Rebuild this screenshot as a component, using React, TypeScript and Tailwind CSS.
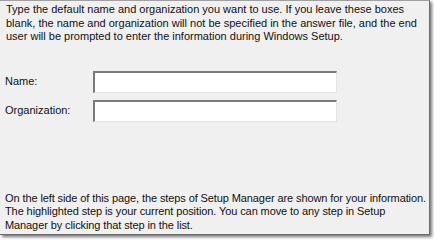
export default function App() {
  const font = { fontFamily: '"Liberation Sans", Arial, sans-serif' };
  return (
    <div className="w-[434px] h-[240px] bg-white" style={font}>
      <div className="w-[430px] h-[235px] bg-[#f0f0f0] border-t border-t-[#a0a0a0] border-r border-r-[#6b6b6b] border-b border-b-[#6b6b6b] shadow-[2px_2px_3px_rgba(0,0,0,0.55)] flex flex-col text-[11px] leading-[13.5px] text-[#111] overflow-hidden">
        <p className="pl-[6px] pt-[2px] pr-2">
          Type the default name and organization you want to use. If you leave these boxes blank, the name and organization will not be specified in the answer file, and the end user will be prompted to enter the information during Windows Setup.
        </p>
        <div className="mt-[27px] flex flex-col gap-[7px] pl-[5px]">
          <div className="flex items-center">
            <span className="w-[88px]">Name:</span>
            <div className="w-[244px] h-[22px] bg-white border-t-2 border-l-2 border-t-[#7a7a7a] border-l-[#7a7a7a] border-r border-b border-r-[#e3e3e3] border-b-[#e3e3e3]" />
          </div>
          <div className="flex items-center">
            <span className="w-[88px]">Organization:</span>
            <div className="w-[244px] h-[22px] bg-white border-t-2 border-l-2 border-t-[#7a7a7a] border-l-[#7a7a7a] border-r border-b border-r-[#e3e3e3] border-b-[#e3e3e3]" />
          </div>
        </div>
        <p className="mt-auto mb-[2px] pl-[5px] whitespace-nowrap tracking-[-0.1px]">
          On the left side of this page, the steps of Setup Manager are shown for your information.
          <br />
          The highlighted step is your current position. You can move to any step in Setup
          <br />
          Manager by clicking that step in the list.
        </p>
      </div>
    </div>
  );
}
